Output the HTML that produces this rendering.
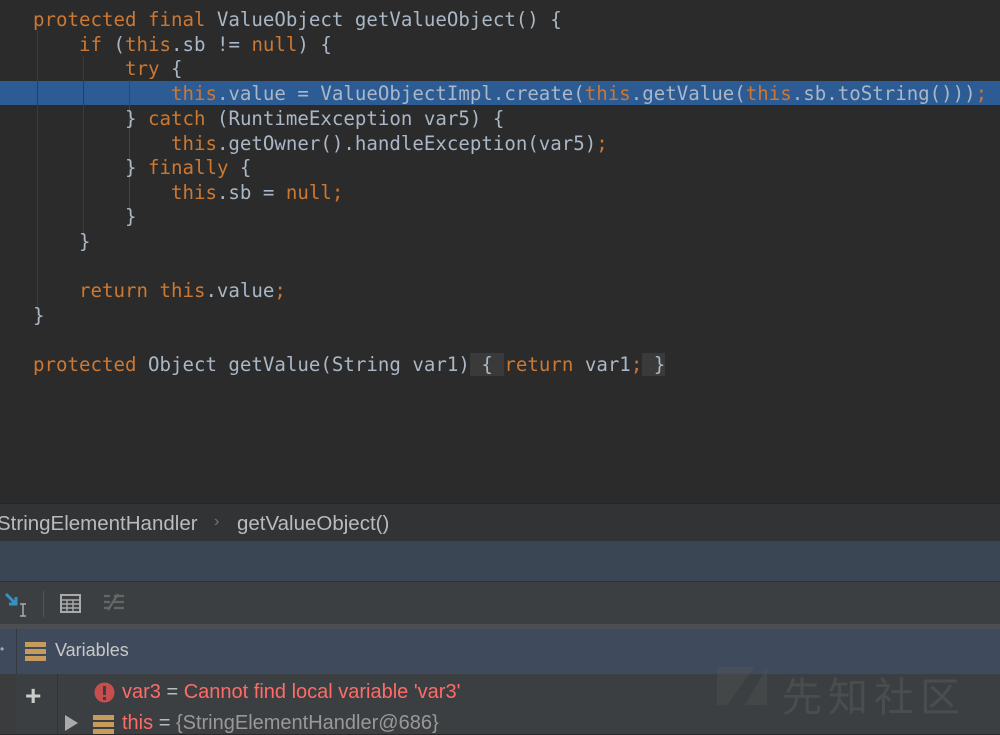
<!DOCTYPE html>
<html><head><meta charset="utf-8"><style>
body{margin:0;width:1000px;height:734px;overflow:hidden;background:#2b2b2b;position:relative;font-family:"Liberation Sans",sans-serif}
.code{position:absolute;left:0;top:0;width:1000px;height:503px;background:#2b2b2b}
.ln{position:absolute;left:33px;font-family:"DejaVu Sans Mono","Liberation Mono",monospace;font-size:19.1px;color:#a9b7c6;white-space:pre;line-height:24px;height:24px}
.k{color:#cc7832}
.hl{position:absolute;left:0;top:81px;width:1000px;height:24px;background:#2d5b94}
.g{position:absolute;width:1px;background:#3b3b3b}
.bx{background:#3a3a3a}
</style></head><body>
<div class="code">
<div class="hl"></div>
<div class="g" style="left:37px;top:30px;height:290px"></div>
<div class="g" style="left:83px;top:56px;height:190px"></div>
<div class="g" style="left:129px;top:80px;height:128px;background:#444"></div>
<div class="ln" style="top:8px"><span class="k">protected final</span> ValueObject getValueObject() {</div>
<div class="ln" style="top:33px">    <span class="k">if</span> (<span class="k">this</span>.sb != <span class="k">null</span>) {</div>
<div class="ln" style="top:57px">        <span class="k">try</span> {</div>
<div class="ln" style="top:82px">            <span class="k">this</span>.value = ValueObjectImpl.create(<span class="k">this</span>.getValue(<span class="k">this</span>.sb.toString()))<span class="k">;</span></div>
<div class="ln" style="top:107px">        } <span class="k">catch</span> (RuntimeException var5) {</div>
<div class="ln" style="top:132px">            <span class="k">this</span>.getOwner().handleException(var5)<span class="k">;</span></div>
<div class="ln" style="top:156px">        } <span class="k">finally</span> {</div>
<div class="ln" style="top:181px">            <span class="k">this</span>.sb = <span class="k">null;</span></div>
<div class="ln" style="top:205px">        }</div>
<div class="ln" style="top:230px">    }</div>
<div class="ln" style="top:279px">    <span class="k">return this</span>.value<span class="k">;</span></div>
<div class="ln" style="top:304px">}</div>
<div class="ln" style="top:353px"><span class="k">protected</span> Object getValue(String var1)<span class="bx"> { </span><span class="k">return</span> var1<span class="k">;</span><span class="bx"> }</span></div>
</div>
<div style="position:absolute;left:0;top:503px;width:1000px;height:38px;background:#313335;border-top:1px solid #262626"></div>
<div style="position:absolute;left:-3px;top:512px;font-size:20.5px;color:#bbbbbb">StringElementHandler</div>
<div style="position:absolute;left:214px;top:513px;font-size:16px;color:#777">›</div>
<div style="position:absolute;left:237px;top:512px;font-size:20.5px;color:#bbbbbb">getValueObject()</div>
<div style="position:absolute;left:0;top:541px;width:1000px;height:40px;background:#3b4654"></div>
<div style="position:absolute;left:0;top:581px;width:1000px;height:43px;background:#3c3f41;border-top:1px solid #323232"></div>
<svg style="position:absolute;left:0;top:588px" width="140" height="30">
<path d="M6 6 L16 16 M16 9 V16 H9" stroke="#3592c4" stroke-width="3" fill="none"/>
<path d="M20 16 H26 M23 16 V28 M20 28 H26" stroke="#aaa" stroke-width="1.5" fill="none"/>
<rect x="43" y="3" width="1" height="26" fill="#555"/>
<rect x="61" y="7" width="19" height="17" fill="none" stroke="#aaa" stroke-width="2"/>
<path d="M61 12 H80 M61 16 H80 M61 20 H80 M67 12 V24 M73 12 V24" stroke="#aaa" stroke-width="1.4"/>
<path d="M104 8 H110 M104 14 H110 M104 20 H110 M114 8 H124 M114 14 H124 M114 20 H124 M108 22 L118 6" stroke="#666" stroke-width="2.2" fill="none"/>
</svg>
<div style="position:absolute;left:0;top:624px;width:1000px;height:5px;background:#4b4f52"></div>
<div style="position:absolute;left:0;top:629px;width:1000px;height:45px;background:#3f4b5c"></div>
<div style="position:absolute;left:16px;top:629px;width:1px;height:45px;background:#33393f"></div>
<div style="position:absolute;left:0;top:642px;width:10px;height:10px;color:#aaa;font-size:12px">•</div>
<svg style="position:absolute;left:25px;top:640px" width="22" height="22"><rect x="0" y="2" width="21" height="5" fill="#c69c5c"/><rect x="0" y="9" width="21" height="5" fill="#c69c5c"/><rect x="0" y="16" width="21" height="5" fill="#c69c5c"/></svg>
<div style="position:absolute;left:55px;top:640px;font-size:18px;color:#c8c8c8">Variables</div>
<div style="position:absolute;left:0;top:674px;width:1000px;height:60px;background:#3c3f41"></div>
<div style="position:absolute;left:0;top:674px;width:16px;height:60px;background:#3a3c3e"></div>
<div style="position:absolute;left:57px;top:674px;width:1px;height:60px;background:#333"></div>
<div style="position:absolute;left:25px;top:680px;font-size:28px;color:#ccc;font-weight:bold">+</div>
<svg style="position:absolute;left:94px;top:682px" width="22" height="22"><circle cx="10.5" cy="10.5" r="10" fill="#c74e4e"/><rect x="9" y="4" width="3" height="9" fill="#3c3f41"/><rect x="9" y="15" width="3" height="3" fill="#3c3f41"/></svg>
<div style="position:absolute;left:122px;top:681px;font-size:20px;color:#ff6b68;white-space:pre">var3 <span style="color:#bbb">=</span> Cannot find local variable 'var3'</div>
<svg style="position:absolute;left:64px;top:714px" width="16" height="18"><path d="M1 1 L14 9 L1 17Z" fill="#aaa"/></svg>
<svg style="position:absolute;left:93px;top:713px" width="22" height="22"><rect x="0" y="2" width="21" height="5" fill="#c69c5c"/><rect x="0" y="9" width="21" height="5" fill="#c69c5c"/><rect x="0" y="16" width="21" height="5" fill="#c69c5c"/></svg>
<div style="position:absolute;left:122px;top:712px;font-size:20px;color:#ff6b68;white-space:pre">this <span style="color:#bbb">=</span> <span style="color:#999">{StringElementHandler@686}</span></div>
<div style="position:absolute;left:717px;top:667px;width:50px;height:38px;background:rgba(90,90,90,0.3);clip-path:polygon(0 0,75% 0,20% 100%,0 100%)"></div>
<div style="position:absolute;left:745px;top:667px;width:22px;height:38px;background:rgba(90,90,90,0.3);clip-path:polygon(100% 0,100% 100%,0 100%)"></div>
<div style="position:absolute;left:782px;top:665px;font-family:'Noto Sans CJK SC',sans-serif;font-size:40px;color:rgba(110,110,110,0.3);letter-spacing:6px">先知社区</div>
</body></html>
